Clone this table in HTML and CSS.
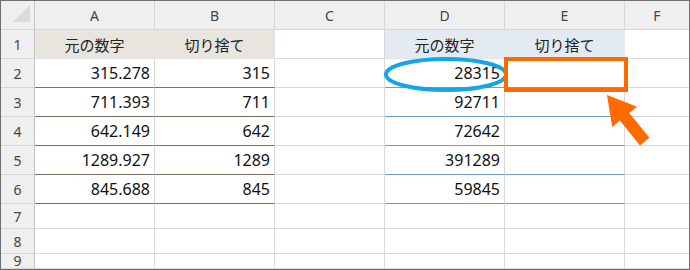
FILE: index.html
```html
<!DOCTYPE html>
<html lang="ja">
<head>
<meta charset="utf-8">
<link rel="stylesheet" href="styles.css">
</head>
<body>
<div class="sheet">
  <div class="grid">
    <div class="corner"><svg class="tri" width="20" height="18" viewBox="0 0 20 18"><polygon points="18,0 18,17 1,17" fill="#dcdcdc"/></svg></div>
    <div class="colhead">A</div>
    <div class="colhead">B</div>
    <div class="colhead">C</div>
    <div class="colhead">D</div>
    <div class="colhead">E</div>
    <div class="colhead last">F</div>

    <div class="rowhead">1</div>
    <div class="cell hb center">元の数字</div>
    <div class="cell hb center">切り捨て</div>
    <div class="cell"></div>
    <div class="cell hd center">元の数字</div>
    <div class="cell hd center">切り捨て</div>
    <div class="cell last"></div>

    <div class="rowhead">2</div>
    <div class="cell ab num">315.278</div>
    <div class="cell ab num">315</div>
    <div class="cell"></div>
    <div class="cell de num">28315</div>
    <div class="cell de"></div>
    <div class="cell last"></div>

    <div class="rowhead">3</div>
    <div class="cell ab num">711.393</div>
    <div class="cell ab num">711</div>
    <div class="cell"></div>
    <div class="cell de num">92711</div>
    <div class="cell de"></div>
    <div class="cell last"></div>

    <div class="rowhead">4</div>
    <div class="cell ab num">642.149</div>
    <div class="cell ab num">642</div>
    <div class="cell"></div>
    <div class="cell de num">72642</div>
    <div class="cell de"></div>
    <div class="cell last"></div>

    <div class="rowhead">5</div>
    <div class="cell ab num">1289.927</div>
    <div class="cell ab num">1289</div>
    <div class="cell"></div>
    <div class="cell de num">391289</div>
    <div class="cell de"></div>
    <div class="cell last"></div>

    <div class="rowhead">6</div>
    <div class="cell ab num">845.688</div>
    <div class="cell ab num">845</div>
    <div class="cell"></div>
    <div class="cell de num">59845</div>
    <div class="cell de"></div>
    <div class="cell last"></div>

    <div class="rowhead">7</div>
    <div class="cell"></div><div class="cell"></div><div class="cell"></div><div class="cell"></div><div class="cell"></div><div class="cell last"></div>

    <div class="rowhead">8</div>
    <div class="cell"></div><div class="cell"></div><div class="cell"></div><div class="cell"></div><div class="cell"></div><div class="cell last"></div>

    <div class="rowhead cut">9</div>
    <div class="cell"></div><div class="cell"></div><div class="cell"></div><div class="cell"></div><div class="cell"></div><div class="cell last"></div>
  </div>
  <svg class="overlay" width="690" height="270" viewBox="0 0 690 270">
    <ellipse cx="446" cy="74.5" rx="60" ry="15.5" fill="none" stroke="#14a4e8" stroke-width="4"/>
    <rect x="506" y="59" width="120" height="31" fill="none" stroke="#ff6a00" stroke-width="4"/>
    <polygon points="607,95 637,106.7 629.3,113 649.4,137.8 640,145.4 619.9,120.6 612.2,126.9" fill="#ff6a00"/>
  </svg>
</div>
</body>
</html>
```

FILE: styles.css
```css
html, body {
  margin: 0;
  padding: 0;
  background: #ffffff;
}

.sheet {
  position: relative;
  width: 690px;
  height: 270px;
  box-sizing: border-box;
  border: 1px solid #6f6f6f;
  overflow: hidden;
  font-family: "Noto Sans CJK JP", "Noto Sans", sans-serif;
}

.grid {
  display: grid;
  grid-template-columns: 34px 120px 120px 110px 120px 120px 1fr;
  grid-template-rows: 29px repeat(6, 29px) 25px 25px 1fr;
  width: 100%;
  height: 100%;
}

.grid > div {
  box-sizing: border-box;
  display: flex;
  align-items: center;
  overflow: hidden;
}

.corner {
  background: #efefef;
  border-right: 1px solid #c4c4c4;
  border-bottom: 1px solid #d6d6d6;
  justify-content: flex-end;
  align-items: flex-end;
  padding: 0 2px 2px 0;
}

.tri {
  display: block;
}

.colhead {
  background: #efefef;
  border-right: 1px solid #d6d6d6;
  border-bottom: 1px solid #d6d6d6;
  justify-content: center;
  color: #444444;
  font-size: 14px;
  font-family: "Noto Sans", "Noto Sans CJK JP", sans-serif;
}

.colhead.last {
  border-right: none;
}

.rowhead {
  background: #efefef;
  border-right: 1px solid #c4c4c4;
  border-bottom: 1px solid #d6d6d6;
  justify-content: center;
  color: #444444;
  font-size: 14px;
  font-family: "Noto Sans", "Noto Sans CJK JP", sans-serif;
}

.rowhead.cut {
  align-items: flex-start;
  padding-top: 0;
  line-height: 14px;
}

.cell {
  background: #ffffff;
  border-right: 1px solid #d9d9d9;
  border-bottom: 1px solid #d9d9d9;
  font-size: 15px;
  color: #111111;
}

.cell.last {
  border-right: none;
}

.center {
  justify-content: center;
}

.num {
  justify-content: flex-end;
  padding-right: 4px;
  font-size: 16px;
  font-family: "Noto Sans", "Noto Sans CJK JP", sans-serif;
}

.hb {
  background: #e8e4de;
  border-right-color: #e8e4de;
  border-bottom-color: #e3e3e3;
  color: #222222;
}

.hd {
  background: #e3eaf1;
  border-right-color: #e3eaf1;
  border-bottom-color: #e3e3e3;
  color: #222222;
}

.ab {
  border-bottom: 1px solid #7e6f5f;
}

.de {
  border-bottom: 1px solid #6f9cc2;
}

.overlay {
  position: absolute;
  left: -1px;
  top: -1px;
  pointer-events: none;
}
```
